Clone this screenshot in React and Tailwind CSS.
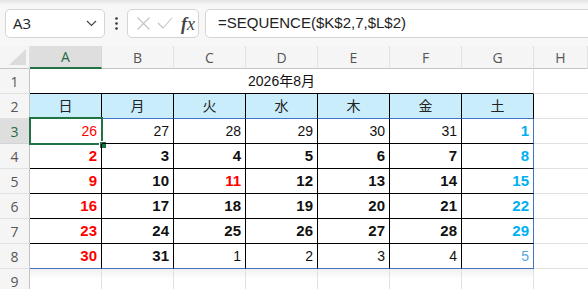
import React from "react";

const RED = "text-[#ff0000]";
const BLUE = "text-[#00b0f0]";

const rows = [
  [
    { v: 26, c: RED, b: false },
    { v: 27 }, { v: 28 }, { v: 29 }, { v: 30 }, { v: 31 },
    { v: 1, c: BLUE, b: true },
  ],
  [
    { v: 2, c: RED, b: true },
    { v: 3, b: true }, { v: 4, b: true }, { v: 5, b: true }, { v: 6, b: true }, { v: 7, b: true },
    { v: 8, c: BLUE, b: true },
  ],
  [
    { v: 9, c: RED, b: true },
    { v: 10, b: true }, { v: 11, c: RED, b: true }, { v: 12, b: true }, { v: 13, b: true }, { v: 14, b: true },
    { v: 15, c: BLUE, b: true },
  ],
  [
    { v: 16, c: RED, b: true },
    { v: 17, b: true }, { v: 18, b: true }, { v: 19, b: true }, { v: 20, b: true }, { v: 21, b: true },
    { v: 22, c: BLUE, b: true },
  ],
  [
    { v: 23, c: RED, b: true },
    { v: 24, b: true }, { v: 25, b: true }, { v: 26, b: true }, { v: 27, b: true }, { v: 28, b: true },
    { v: 29, c: BLUE, b: true },
  ],
  [
    { v: 30, c: RED, b: true },
    { v: 31, b: true }, { v: 1 }, { v: 2 }, { v: 3 }, { v: 4 },
    { v: 5, c: "text-[#56a6dc]" },
  ],
];

const days = ["日", "月", "火", "水", "木", "金", "土"];
const cols = ["A", "B", "C", "D", "E", "F", "G", "H"];

const FONT = { fontFamily: "'Liberation Sans', 'Noto Sans CJK JP', sans-serif" };
const UIFONT = { fontFamily: "'Open Sans', 'Liberation Sans', sans-serif" };

function RowHead({ n, active }) {
  return (
    <div
      className={`flex items-center justify-center border-r border-b text-[14px] ${
        active
          ? "bg-[#dedede] text-[#1e6b41] border-r-[#c4c4c4] border-b-[#d5d5d5]"
          : "bg-[#f5f5f5] text-[#555] border-r-[#c4c4c4] border-b-[#e1e1e1]"
      }`}
      style={UIFONT}
    >
      {n}
    </div>
  );
}

export default function App() {
  return (
    <div className="w-[588px] h-[289px] overflow-hidden bg-white relative" style={FONT}>
      {/* top bar */}
      <div className="h-[46px] bg-[#f7f7f7] flex flex-col overflow-hidden">
        <div className="h-[4px] shrink-0 bg-gradient-to-b from-[#e4e4e4] to-[#f3f3f3]" />
        <div className="flex items-start pt-[5px] pl-[5px]">
          <div
            className="shrink-0 w-[100px] h-[29px] bg-white border border-[#d4d4d4] rounded-[5px] flex items-center justify-between pl-[7px] pr-[7px] text-[15px] text-[#222]"
            style={UIFONT}
          >
            <span>A3</span>
            <svg width="11" height="7" viewBox="0 0 11 7">
              <path d="M1 1 L5.5 5.5 L10 1" fill="none" stroke="#444" strokeWidth="1.2" />
            </svg>
          </div>
          <div className="shrink-0 w-[22px] h-[29px] flex items-center justify-center">
            <svg width="3" height="13" viewBox="0 0 3 13">
              <circle cx="1.5" cy="1.5" r="1.3" fill="#333" />
              <circle cx="1.5" cy="6.5" r="1.3" fill="#333" />
              <circle cx="1.5" cy="11.5" r="1.3" fill="#333" />
            </svg>
          </div>
          <div className="shrink-0 w-[72px] h-[29px] bg-white border border-[#d4d4d4] rounded-[5px] flex items-center pl-[9px]">
            <svg width="13" height="13" viewBox="0 0 13 13">
              <path d="M0.5 0.5 L12.5 12.5 M12.5 0.5 L0.5 12.5" stroke="#c4c4c4" strokeWidth="1.1" />
            </svg>
            <svg width="16" height="13" viewBox="0 0 16 13" className="ml-[7px]">
              <path d="M1 6 L6 11 L15 1" fill="none" stroke="#c4c4c4" strokeWidth="1.1" />
            </svg>
            <span
              className="ml-[8px] text-[18px] italic text-[#444] leading-none"
              style={{ fontFamily: "'Liberation Serif', serif" }}
            >
              <span className="font-bold">f</span>x
            </span>
          </div>
          <div className="shrink-0 ml-[6px] w-[420px] h-[29px] bg-white border border-[#d4d4d4] rounded-l-[5px] flex items-center pl-[12px] text-[15px] text-[#222]">
            =SEQUENCE($K$2,7,$L$2)
          </div>
        </div>
      </div>

      {/* column headers */}
      <div className="grid grid-cols-[30px_repeat(7,72px)_1fr] h-[23px]" style={UIFONT}>
        <div className="bg-[#f5f5f5] border-r border-b border-r-[#e1e1e1] border-b-[#c4c4c4] relative">
          <svg width="17" height="16" viewBox="0 0 17 16" className="absolute right-[3px] bottom-[3px]">
            <path d="M17 0 L17 16 L0 16 Z" fill="#dcdcdc" />
          </svg>
        </div>
        {cols.map((c, i) => (
          <div
            key={c}
            className={`flex items-center justify-center text-[14px] border-r ${
              i === 0
                ? "bg-[#dedede] text-[#1e6b41] border-b-2 border-b-[#217346] border-r-[#d5d5d5]"
                : "bg-[#f5f5f5] text-[#555] border-b border-b-[#c4c4c4] border-r-[#e1e1e1]"
            }`}
          >
            {c}
          </div>
        ))}
      </div>

      {/* sheet */}
      <div className="grid grid-cols-[30px_repeat(7,72px)_1fr] auto-rows-[25px]">
        {/* row 1 */}
        <RowHead n={1} />
        <div className="col-span-7 flex items-center justify-center border-b border-r border-b-black border-r-[#e1e1e1] text-[14px] text-[#111]">
          2026年8月
        </div>
        <div className="border-b border-[#e1e1e1]" />

        {/* row 2 */}
        <RowHead n={2} />
        {days.map((d) => (
          <div
            key={d}
            className="flex items-center justify-center bg-[#caedfb] border-r border-r-black border-b border-b-[#4472c4] text-[14px] text-[#222]"
          >
            {d}
          </div>
        ))}
        <div className="border-b border-[#e1e1e1]" />

        {/* rows 3-8 */}
        {rows.map((r, ri) => (
          <React.Fragment key={ri}>
            <RowHead n={ri + 3} active={ri === 0} />
            {r.map((cell, ci) => (
              <div
                key={ci}
                className={`relative flex items-center justify-end pr-[4px] border-r border-b ${
                  ci === 6 ? "border-r-[#4472c4]" : "border-r-black"
                } ${ri === 5 ? "border-b-[#4472c4]" : "border-b-black"} ${
                  cell.b ? "font-bold text-[15px]" : "text-[14px]"
                } ${cell.c || "text-[#111]"}`}
              >
                {cell.v}
                {ri === 0 && ci === 0 && (
                  <div className="absolute left-[-1px] top-[-2px] right-[-2px] bottom-[-2px] border-2 border-[#217346] pointer-events-none">
                    <div className="absolute right-[-5px] bottom-[-5px] w-[6px] h-[6px] bg-[#217346] outline outline-1 outline-white" />
                  </div>
                )}
              </div>
            ))}
            <div className="border-b border-[#e1e1e1]" />
          </React.Fragment>
        ))}

        {/* row 9 */}
        <RowHead n={9} />
        {days.map((d) => (
          <div key={d} className="border-r border-b border-[#e1e1e1] bg-gradient-to-b from-[#f0f0f0] to-white to-40%" />
        ))}
        <div className="border-b border-[#e1e1e1]" />
      </div>
    </div>
  );
}
